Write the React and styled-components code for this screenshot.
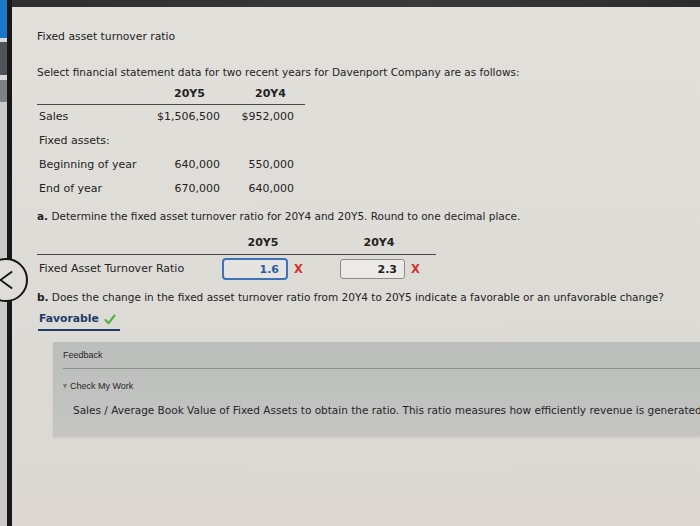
import React from 'react'
import styled, { createGlobalStyle } from 'styled-components'

const GlobalStyle = createGlobalStyle`
  html, body {
    margin: 0;
    padding: 0;
    height: 100%;
    overflow: hidden;
  }
  body {
    background: #dedcd7;
    font-family: 'DejaVu Sans', Verdana, sans-serif;
    color: #232323;
  }
`

const stripSegments = [
  { h: 38, c: '#1d77c8' },
  { h: 4, c: '#d9dbdd' },
  { h: 33, c: '#4f5357' },
  { h: 5, c: '#d6d8da' },
  { h: 22, c: '#7d8185' },
  { h: 424, c: '#c9c9c9' }
]

const Screen = styled.div`
  position: relative;
  display: flex;
  width: 700px;
  height: 526px;
  overflow: hidden;
`

const Bezel = styled.div`
  display: flex;
  flex: 0 0 12px;
`

const Strip = styled.div`
  display: flex;
  flex-direction: column;
  width: 7px;
`

const Segment = styled.div`
  height: ${({ $h }) => $h}px;
  background: ${({ $c }) => $c};
`

const Edge = styled.div`
  width: 5px;
  background: #1a1718;
`

const Page = styled.div`
  flex: 1;
  display: flex;
  flex-direction: column;
  min-width: 0;
  background: linear-gradient(180deg, #e1e0db 0%, #dddbd6 60%, #dcd7d3 100%);
`

const TopBar = styled.div`
  height: 7px;
  background: linear-gradient(90deg, #2f2f2f, #3a3a3a 60%, #2c2c2c);
`

const Content = styled.div`
  padding: 22px 0 0 25px;
  font-size: 11px;
  line-height: 16px;
`

const Title = styled.div`
  font-size: 10.8px;
  margin-bottom: 19px;
`

const Para = styled.div`
  margin-top: ${({ $mt }) => $mt || 0}px;
  font-size: 10.5px;
  white-space: nowrap;

  b {
    font-weight: bold;
  }
`

const Grid = styled.div`
  display: grid;
  grid-template-columns: ${({ $cols }) => $cols};
  width: ${({ $w }) => $w}px;
  margin-top: ${({ $mt }) => $mt || 0}px;
`

const HeadRow = styled.div`
  display: contents;
`

const HeadCell = styled.div`
  height: ${({ $h }) => $h}px;
  display: flex;
  align-items: center;
  justify-content: ${({ $align }) => $align || 'center'};
  padding-left: ${({ $pl }) => $pl || 0}px;
  padding-right: ${({ $pr }) => $pr || 0}px;
  font-weight: bold;
  border-bottom: 1.5px solid #4a4a4a;
`

const Cell = styled.div`
  height: ${({ $h }) => $h}px;
  display: flex;
  align-items: center;
  justify-content: ${({ $align }) => $align || 'flex-start'};
  padding-left: ${({ $pl }) => $pl || 0}px;
  padding-right: ${({ $pr }) => $pr || 0}px;
`

const AnswerBox = styled.input`
  box-sizing: border-box;
  width: ${({ $w }) => $w}px;
  height: ${({ $focus }) => ($focus ? 22 : 20)}px;
  border: ${({ $focus }) => ($focus ? '2.5px solid #3d72b8' : '1px solid #8c8c8a')};
  border-radius: ${({ $focus }) => ($focus ? 4 : 3)}px;
  background: ${({ $focus }) => ($focus ? '#e5e4e0' : '#ebeae6')};
  color: ${({ $focus }) => ($focus ? '#2f5d9f' : '#222')};
  font-family: 'DejaVu Sans', Verdana, sans-serif;
  font-size: 11px;
  font-weight: bold;
  text-align: right;
  padding: 0 7px 0 0;
  outline: none;
`

const Wrong = styled.span`
  color: #d6302c;
  font-family: 'DejaVu Sans', Verdana, sans-serif;
  font-size: 11.5px;
  font-weight: bold;
  margin-left: 6px;
`

const Answer = styled.div`
  display: inline-flex;
  align-items: center;
  gap: 5px;
  margin-top: 6px;
  margin-left: 1px;
  padding: 0 4px 2px 1px;
  border-bottom: 2px solid #1f3a6b;
  color: #1f3a6b;
  font-size: 10.8px;
  font-weight: bold;
`

const FeedbackPanel = styled.div`
  margin: 11px 0 0 41px;
  padding: 7px 0 18px 10px;
  background: linear-gradient(180deg, #bcbebc 0%, #c0c2c0 60%, #c4c5c3 100%);
  box-shadow: 0 2px 2px rgba(0, 0, 0, 0.08);
  white-space: nowrap;
  overflow: hidden;
`

const FeedbackHead = styled.div`
  font-family: 'Liberation Sans', Arial, sans-serif;
  font-size: 9px;
  line-height: 12px;
  padding-bottom: 7px;
  border-bottom: 1.5px solid #8e908e;
  color: #262626;
`

const CheckToggle = styled.div`
  display: flex;
  align-items: center;
  gap: 2px;
  margin-top: 11px;
  font-family: 'Liberation Sans', Arial, sans-serif;
  font-size: 9px;
  line-height: 12px;
  color: #262626;
`

const Triangle = styled.span`
  width: 0;
  height: 0;
  border-left: 2.5px solid transparent;
  border-right: 2.5px solid transparent;
  border-top: 5px solid #7a7a7a;
  margin-right: 1px;
`

const Explanation = styled.div`
  margin-top: 10px;
  padding-left: 10px;
  font-size: 10.5px;
  line-height: 16px;
  color: #262626;
`

const BackButton = styled.div`
  position: absolute;
  left: -16px;
  top: 258px;
  width: 44px;
  height: 44px;
  box-sizing: border-box;
  border: 2px solid #141414;
  border-radius: 50%;
  background: #dfddd8;
  display: flex;
  align-items: center;
  justify-content: flex-end;
  padding-right: 13px;
`

const dataRows = [
  { label: 'Sales', y5: '$1,506,500', y4: '$952,000' },
  { label: 'Fixed assets:', y5: '', y4: '' },
  { label: 'Beginning of year', y5: '640,000', y4: '550,000' },
  { label: 'End of year', y5: '670,000', y4: '640,000' }
]

const DataTable = () => (
  <Grid $cols="118px 69px 81px" $w={268} $mt={4}>
    <HeadRow>
      <HeadCell $h={20} />
      <HeadCell $h={20}>20Y5</HeadCell>
      <HeadCell $h={20} $pl={12}>20Y4</HeadCell>
    </HeadRow>
    {dataRows.map(row => (
      <HeadRow key={row.label}>
        <Cell $h={24} $pl={2}>{row.label}</Cell>
        <Cell $h={24} $align="flex-end" $pr={4}>{row.y5}</Cell>
        <Cell $h={24} $align="flex-end" $pr={11}>{row.y4}</Cell>
      </HeadRow>
    ))}
  </Grid>
)

const RatioTable = () => (
  <Grid $cols="185px 82px 36px 78px 18px" $w={399} $mt={8}>
    <HeadRow>
      <HeadCell $h={22} />
      <HeadCell $h={22}>20Y5</HeadCell>
      <HeadCell $h={22} />
      <HeadCell $h={22}>20Y4</HeadCell>
      <HeadCell $h={22} />
    </HeadRow>
    <HeadRow>
      <Cell $h={28} $pl={2}>Fixed Asset Turnover Ratio</Cell>
      <Cell $h={28}>
        <AnswerBox $focus $w={66} readOnly value="1.6" />
        <Wrong>X</Wrong>
      </Cell>
      <Cell $h={28} />
      <Cell $h={28}>
        <AnswerBox $w={65} readOnly value="2.3" />
        <Wrong>X</Wrong>
      </Cell>
      <Cell $h={28} />
    </HeadRow>
  </Grid>
)

const CheckMark = () => (
  <svg width="12" height="11" viewBox="0 0 12 11">
    <path d="M1.5 6 L4.5 9.2 L10.5 1.5" fill="none" stroke="#5aad46" strokeWidth="2.2" strokeLinecap="round" strokeLinejoin="round" />
  </svg>
)

const Chevron = () => (
  <svg width="14" height="20" viewBox="0 0 14 20">
    <path d="M12.5 2 L1.5 10 L12.5 18" fill="none" stroke="#161616" strokeWidth="2" strokeLinecap="round" strokeLinejoin="round" />
  </svg>
)

export default function App() {
  return (
    <>
      <GlobalStyle />
      <Screen>
        <Bezel>
          <Strip>
            {stripSegments.map((s, i) => (
              <Segment key={i} $h={s.h} $c={s.c} />
            ))}
          </Strip>
          <Edge />
        </Bezel>
        <Page>
          <TopBar />
          <Content>
            <Title>Fixed asset turnover ratio</Title>
            <Para>Select financial statement data for two recent years for Davenport Company are as follows:</Para>
            <DataTable />
            <Para $mt={7}>
              <b>a.</b> Determine the fixed asset turnover ratio for 20Y4 and 20Y5. Round to one decimal place.
            </Para>
            <RatioTable />
            <Para $mt={6}>
              <b>b.</b> Does the change in the fixed asset turnover ratio from 20Y4 to 20Y5 indicate a favorable or an unfavorable change?
            </Para>
            <Answer>
              Favorable <CheckMark />
            </Answer>
          </Content>
          <FeedbackPanel>
            <FeedbackHead>Feedback</FeedbackHead>
            <CheckToggle>
              <Triangle />
              Check My Work
            </CheckToggle>
            <Explanation>
              Sales / Average Book Value of Fixed Assets to obtain the ratio. This ratio measures how efficiently revenue is generated from the use of fixed assets.
            </Explanation>
          </FeedbackPanel>
        </Page>
        <BackButton>
          <Chevron />
        </BackButton>
      </Screen>
    </>
  )
}
